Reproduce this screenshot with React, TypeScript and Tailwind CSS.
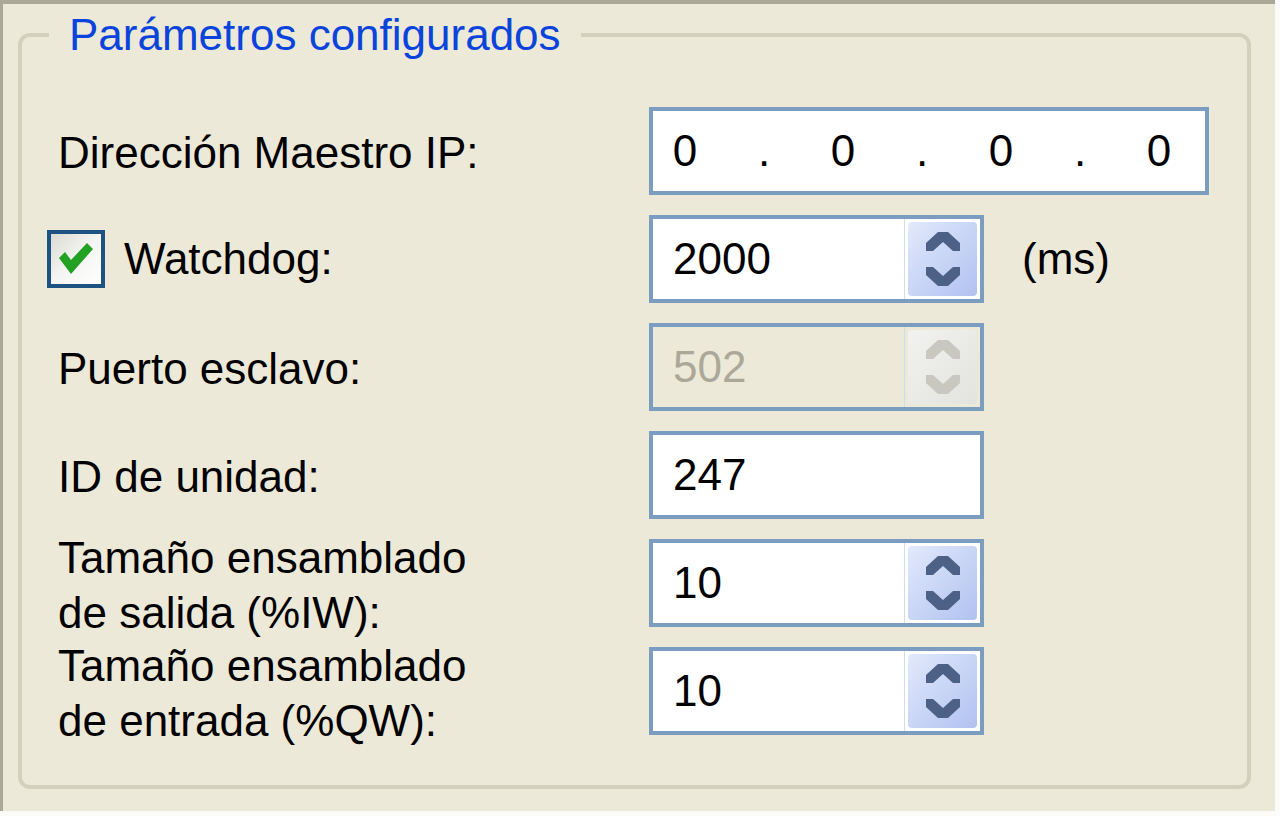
import { FunctionComponent, ReactNode } from "react";

const font = { fontFamily: '"Liberation Sans", Arial, sans-serif' };

const Chevrons: FunctionComponent<{ disabled?: boolean }> = ({ disabled }) => {
    const fill = disabled ? "#c9c8c0" : "#4d6186";
    return (
        <svg width="34" height="56" viewBox="0 0 34 56">
            <polygon points="0,12 12,1 22,1 34,12 34,20 27,20 17,11 7,20 0,20" fill={fill} />
            <polygon points="0,36 7,36 17,45 27,36 34,36 34,44 22,55 12,55 0,44" fill={fill} />
        </svg>
    );
};

const SpinBox: FunctionComponent<{ value: string, disabled?: boolean }> = ({ value, disabled }) => {
    return (
        <div className={`w-[335px] h-[88px] border-[4px] border-[#7a9dc0] flex items-stretch ${disabled ? "bg-[#ece9d8]" : "bg-white"}`}>
            <div className={`flex-1 flex items-center pl-[20px] border-r border-[#cfdcef] ${disabled ? "text-[#aca899]" : "text-black"}`}>
                {value}
            </div>
            <div className="p-[3px] flex">
                <div className={`w-[69px] rounded-[4px] flex items-center justify-center ${disabled ? "bg-gradient-to-br from-[#f2f2f0] to-[#e2e2de]" : "bg-gradient-to-br from-[#e2e9fc] to-[#b1c2f0]"}`}>
                    <Chevrons disabled={disabled} />
                </div>
            </div>
        </div>
    );
};

const Row: FunctionComponent<{ label: ReactNode, children: ReactNode }> = ({ label, children }) => (
    <div className="flex items-center h-[88px]">
        <div className="w-[591px] leading-[55px] pt-[3px]">{label}</div>
        {children}
    </div>
);

export default function App() {
    return (
        <div className="w-[1280px] h-[816px] bg-[#fbfbf9]" style={font}>
            <div className="w-[1275px] h-[811px] bg-[#ece9d8] border-t-[4px] border-l-[3px] border-[#aca899] text-[44px] text-black">
                <fieldset className="ml-[15px] mt-[9px] w-[1233px] h-[776px] border-[4px] border-[#d3d0bd] rounded-[12px] pl-[36px] pt-[50px]">
                    <legend className="-ml-[9px] px-[20px] text-[#0a44dc] leading-[44px]">Parámetros configurados</legend>

                    <div className="flex flex-col gap-[20px]">
                        <Row label="Dirección Maestro IP:">
                            <div className="w-[560px] h-[88px] border-[4px] border-[#7a9dc0] bg-white flex items-center">
                                {["0", "0", "0", "0"].map((v, i) => (
                                    <div key={i} className="flex items-center">
                                        <span className="w-[64px] text-center">{v}</span>
                                        {i < 3 && <span className="w-[94px] text-center">.</span>}
                                    </div>
                                ))}
                            </div>
                        </Row>

                        <div className="flex items-center h-[88px]">
                            <div className="w-[602px] flex items-center -ml-[11px]">
                                <div className="w-[58px] h-[58px] border-[4px] border-[#1e5283] bg-gradient-to-br from-[#dcdbd4] via-[#f4f4f2] to-white flex items-center justify-center">
                                    <svg width="36" height="32" viewBox="0 0 36 32">
                                        <polygon points="1,15 7,9 13,17 29,0 35,6 13,31" fill="#22a123" />
                                    </svg>
                                </div>
                                <span className="ml-[19px]">Watchdog:</span>
                            </div>
                            <SpinBox value="2000" />
                            <span className="ml-[38px]">(ms)</span>
                        </div>

                        <Row label="Puerto esclavo:">
                            <SpinBox value="502" disabled />
                        </Row>

                        <Row label="ID de unidad:">
                            <div className="w-[335px] h-[88px] border-[4px] border-[#7a9dc0] bg-white flex items-center pl-[20px]">247</div>
                        </Row>

                        <Row label={<>Tamaño ensamblado<br />de salida (%IW):</>}>
                            <SpinBox value="10" />
                        </Row>

                        <Row label={<>Tamaño ensamblado<br />de entrada (%QW):</>}>
                            <SpinBox value="10" />
                        </Row>
                    </div>
                </fieldset>
            </div>
        </div>
    );
}
